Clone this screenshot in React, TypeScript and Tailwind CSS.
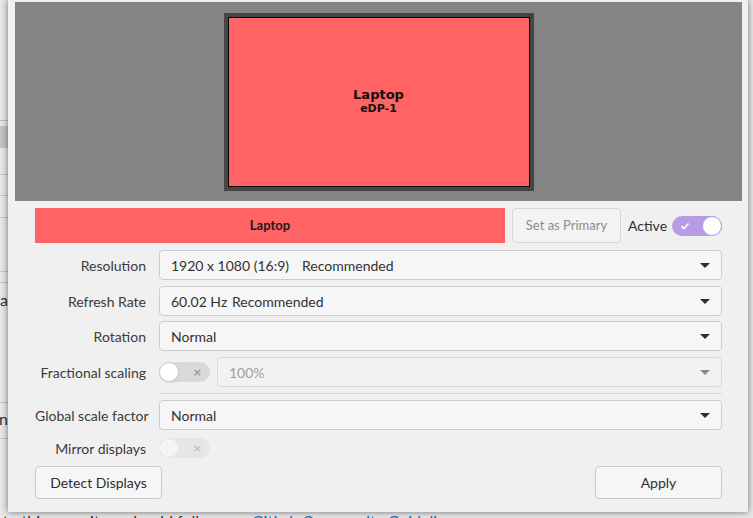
import React from "react";

const font = { fontFamily: "Lato, 'Noto Sans', sans-serif" };

function Caret({ color = "#2e2e2e" }: { color?: string }) {
  return (
    <svg width="10" height="5" viewBox="0 0 10 5" className="shrink-0">
      <path d="M0 0 L10 0 L5 5 Z" fill={color} />
    </svg>
  );
}

function Dropdown({ children, disabled = false }: { children: React.ReactNode; disabled?: boolean }) {
  return (
    <div
      className={
        "flex-1 h-[30px] rounded-[4px] border flex items-center pl-[11px] pr-[11px] " +
        (disabled ? "border-[#d9d9d9] bg-[#f2f2f2] text-[#a0a0a0]" : "border-[#cdcdcd] bg-[#f6f6f6] text-[#323232]")
      }
    >
      <div className="flex-1 flex items-center whitespace-nowrap">{children}</div>
      <Caret color={disabled ? "#8a8a8a" : "#2e2e2e"} />
    </div>
  );
}

function Label({ children }: { children: React.ReactNode }) {
  return <div className="w-[111px] shrink-0 mr-[13px] text-right text-[#3a3a3a] whitespace-nowrap">{children}</div>;
}

function OffToggle({ dim = false }: { dim?: boolean }) {
  return (
    <div
      className={
        "w-[51px] h-[20px] rounded-full flex items-center justify-between shrink-0 " +
        (dim ? "bg-[#e6e6e6]" : "bg-[#d9d9d9]")
      }
    >
      <div
        className={
          "w-[20px] h-[20px] rounded-full " +
          (dim ? "bg-[#f4f4f4] border border-[#e6e6e6]" : "bg-white border border-[#cfcfcf] shadow-[0_1px_1px_rgba(0,0,0,0.1)]")
        }
      />
      <span className={"mr-[8px] text-[11px] leading-none " + (dim ? "text-[#b8b8b8]" : "text-[#8a8a8a]")} style={{ fontFamily: "'DejaVu Sans', sans-serif" }}>
        ×
      </span>
    </div>
  );
}

function OnToggle() {
  return (
    <div className="w-[50px] h-[20px] rounded-full bg-[#b89de6] flex items-center justify-between shrink-0">
      <svg width="10" height="8" viewBox="0 0 10 8" className="ml-[8px]">
        <path d="M1.5 4.2 L4 6.5 L8.5 1.5" stroke="white" strokeWidth="1.6" fill="none" />
      </svg>
      <div className="w-[20px] h-[20px] rounded-full bg-white border border-[#b89de6]" />
    </div>
  );
}

export default function App() {
  return (
    <div className="relative w-[753px] h-[518px] overflow-hidden bg-[#eaeaea]" style={font}>
      {/* background window strip on the left */}
      <div className="absolute left-0 top-0 w-[8px] h-[518px] flex flex-col bg-[#e9e9e9] overflow-hidden">
        <div className="h-[121px] shrink-0 border-b border-[#c2c2c2]" />
        <div className="h-[5px] shrink-0" />
        <div className="h-[22px] shrink-0 bg-[#c6c6c6]" />
        <div className="h-[27px] shrink-0 border-b border-[#c6c6c6]" />
        <div className="h-[21px] shrink-0 border-b border-[#c6c6c6]" />
        <div className="h-[22px] shrink-0 border-b border-[#c6c6c6]" />
        <div className="h-[54px] shrink-0 border-b border-[#c6c6c6]" />
        <div className="h-[11px] shrink-0 border-b border-[#c6c6c6]" />
        <div className="h-[120px] shrink-0 border-b border-[#c6c6c6] flex justify-end">
          <span className="text-[16px] text-[#333] leading-none mt-[9px] whitespace-nowrap">a</span>
        </div>
        <div className="h-[36px] shrink-0 border-b border-[#c6c6c6] flex justify-end">
          <span className="text-[16px] text-[#333] leading-none mt-[8px] whitespace-nowrap">n</span>
        </div>
      </div>
      {/* background text at the bottom */}
      <div className="absolute left-[-18px] top-[511px] whitespace-nowrap text-[16px] text-[#333] leading-[20px]">
        ge to this repository should follow our <span className="text-[#1f6fb5]">GitLab Community Guidelines</span>
      </div>

      {/* dialog */}
      <div className="absolute left-[8px] top-0 w-[740px] h-[512px] bg-[#f0f0f0] shadow-[0_0_7px_rgba(0,0,0,0.55)] flex flex-col text-[14px]">
        {/* display canvas */}
        <div className="mt-[2px] ml-[7px] w-[727px] h-[199px] bg-[#848484] flex items-start justify-center shrink-0">
          <div className="mt-[11px] w-[310px] h-[178px] bg-[#454545] p-[4px] flex">
            <div className="flex-1 border border-black bg-[#ff6363] flex flex-col items-center justify-center" style={{ fontFamily: "'DejaVu Sans', sans-serif" }}>
              <div className="text-[13px] font-bold text-[#111] leading-[15px] mt-[-2px]">Laptop</div>
              <div className="text-[11px] font-bold text-[#111] leading-[13px]">eDP-1</div>
            </div>
          </div>
        </div>

        <div className="pl-[27px] pr-[26px] flex flex-col">
          {/* display header row */}
          <div className="mt-[7px] h-[35px] flex items-stretch">
            <div className="w-[470px] bg-[#ff6363] flex items-center justify-center font-bold text-[13px] text-[#1a1a1a] pt-[1px]">Laptop</div>
            <div className="ml-[7px] w-[109px] rounded-[4px] border border-[#d6d6d6] bg-[#f3f3f3] flex items-center justify-center text-[13px] text-[#8c8c8c]">
              Set as Primary
            </div>
            <div className="flex-1 ml-[7px] flex items-center justify-between">
              <span className="text-[#2e2e2e]">Active</span>
              <OnToggle />
            </div>
          </div>

          <div className="mt-[7px] flex items-center">
            <Label>Resolution</Label>
            <Dropdown>
              <span className="inline-block w-[131px]">1920 x 1080 (16:9)</span>
              <span>Recommended</span>
            </Dropdown>
          </div>
          <div className="mt-[6px] flex items-center">
            <Label>Refresh Rate</Label>
            <Dropdown>
              <span className="inline-block w-[61px]">60.02 Hz</span>
              <span>Recommended</span>
            </Dropdown>
          </div>
          <div className="mt-[5px] flex items-center">
            <Label>Rotation</Label>
            <Dropdown>Normal</Dropdown>
          </div>
          <div className="mt-[6px] flex items-center">
            <Label>Fractional scaling</Label>
            <OffToggle />
            <div className="ml-[7px] flex-1 flex">
              <Dropdown disabled>100%</Dropdown>
            </div>
          </div>
          <div className="mt-[6px] ml-[124px] border-t border-[#d8d8d8]" />
          <div className="mt-[6px] flex items-center">
            <Label>Global scale factor</Label>
            <Dropdown>Normal</Dropdown>
          </div>
          <div className="mt-[8px] flex items-center h-[20px]">
            <Label>Mirror displays</Label>
            <OffToggle dim />
          </div>
          <div className="mt-[8px] h-[33px] flex justify-between">
            <div className="w-[127px] rounded-[4px] border border-[#c9c9c9] bg-[#f6f6f6] flex items-center justify-center text-[#2e2e2e]">
              Detect Displays
            </div>
            <div className="w-[127px] rounded-[4px] border border-[#c9c9c9] bg-[#f6f6f6] flex items-center justify-center text-[#2e2e2e]">
              Apply
            </div>
          </div>
        </div>
      </div>
    </div>
  );
}
